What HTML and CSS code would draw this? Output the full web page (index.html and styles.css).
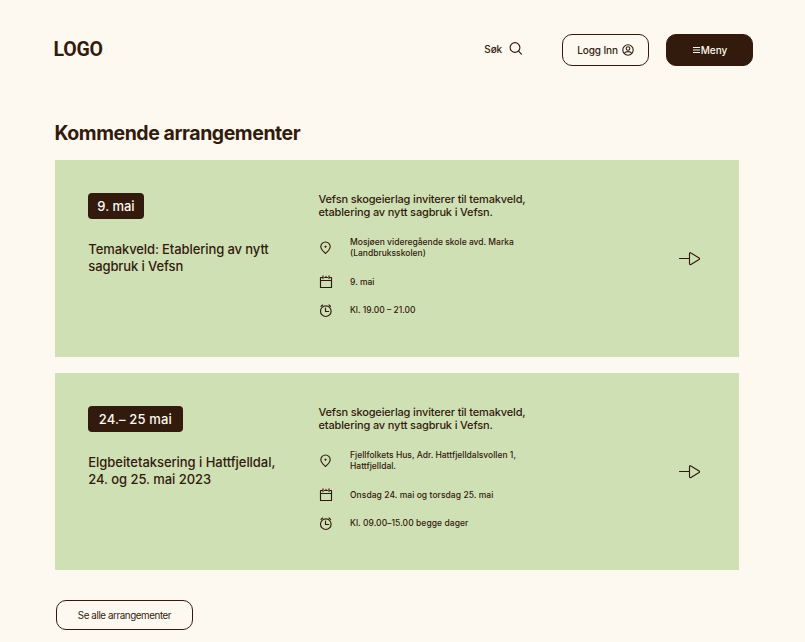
FILE: index.html
```
<!DOCTYPE html>
<html lang="no">
<head>
<meta charset="utf-8">
<title>Kommende arrangementer</title>
<link rel="stylesheet" href="styles.css">
</head>
<body>
<svg class="sprite" aria-hidden="true">
  <symbol id="pin" viewBox="0 0 14 14"><path d="M6.500 12.500C4.700 10.700 1.800 8.400 1.800 5.700A4.700 4.700 0 0 1 11.200 5.700C11.200 8.400 8.300 10.700 6.500 12.500Z"/><path d="M6.500 5v1.200M5.900 5.600h1.200"/></symbol>
  <symbol id="calendar" viewBox="0 0 14 14"><path d="M3 2.500H1.500v10h11v-10H11M5.500 2.500h3M1.500 5.500h11M4 .9v2.700M10 .9v2.700M7 1.400v1.100"/></symbol>
  <symbol id="clock" viewBox="0 0 14 14"><circle cx="6.800" cy="7.200" r="5.300"/><path d="M6.500 4v3.500h3.200M2 2.400 3.600 1M11.600 2.400 10 1"/></symbol>
  <symbol id="arrow" viewBox="0 0 22 14"><path d="M.5 6.500h10M10.500 1.500v10.300c0 .8.800 1 1.400.600l8.200-5c.6-.4.600-1 0-1.400l-8.200-5.100c-.6-.4-1.400-.2-1.400.6Z"/></symbol>
</svg>
<header class="header">
  <div class="logo">LOGO</div>
  <nav class="nav">
    <a class="search">Søk
      <svg class="search-icon" viewBox="0 0 14 14"><circle cx="6" cy="5.500" r="4.900"/><path d="m9.500 9.100 3 3"/></svg>
    </a>
    <a class="button login">Logg Inn
      <svg class="user-icon" viewBox="0 0 12 12"><circle cx="6" cy="6" r="5.200"/><circle cx="6" cy="4.500" r="1.800"/><path d="M2.300 9.300c1.600-2.300 5.800-2.300 7.400 0"/></svg>
    </a>
    <a class="button menu"><svg class="menu-icon" viewBox="0 0 7 6"><path d="M0 .5h7M0 3h7M0 5.500h7"/></svg>Meny</a>
  </nav>
</header>
<main class="main">
  <h1 class="heading">Kommende arrangementer</h1>
  <article class="card">
    <div class="summary">
      <span class="date">9. mai</span>
      <h2 class="title">Temakveld: Etablering av nytt<br>sagbruk i Vefsn</h2>
    </div>
    <div class="details">
      <p class="intro">Vefsn skogeierlag inviterer til temakveld,<br>etablering av nytt sagbruk i Vefsn.</p>
      <ul class="facts">
        <li class="fact place"><svg class="icon"><use href="#pin"/></svg><span>Mosjøen videregående skole avd. Marka<br>(Landbruksskolen)</span></li>
        <li class="fact"><svg class="icon"><use href="#calendar"/></svg><span>9. mai</span></li>
        <li class="fact"><svg class="icon"><use href="#clock"/></svg><span>Kl. 19.00 – 21.00</span></li>
      </ul>
    </div>
    <svg class="arrow"><use href="#arrow"/></svg>
  </article>
  <article class="card">
    <div class="summary">
      <span class="date date-range">24.– 25 mai</span>
      <h2 class="title title-wide">Elgbeitetaksering i Hattfjelldal,<br>24. og 25. mai 2023</h2>
    </div>
    <div class="details">
      <p class="intro">Vefsn skogeierlag inviterer til temakveld,<br>etablering av nytt sagbruk i Vefsn.</p>
      <ul class="facts">
        <li class="fact place"><svg class="icon"><use href="#pin"/></svg><span>Fjellfolkets Hus, Adr. Hattfjelldalsvollen 1,<br>Hattfjelldal.</span></li>
        <li class="fact"><svg class="icon"><use href="#calendar"/></svg><span class="spaced">Onsdag 24. mai og torsdag 25. mai</span></li>
        <li class="fact"><svg class="icon"><use href="#clock"/></svg><span class="spaced">Kl. 09.00–15.00 begge dager</span></li>
      </ul>
    </div>
    <svg class="arrow"><use href="#arrow"/></svg>
  </article>
  <a class="button all">Se alle arrangementer</a>
</main>
</body>
</html>
```
FILE: styles.css
```
* { box-sizing: border-box; }
html { overflow: hidden; }
body {
  margin: 0;
  background: #fef9f0;
  color: #321b0d;
  font-family: Inter, "Liberation Sans", sans-serif;
  font-weight: 500;
}
h1, h2, p, ul { margin: 0; padding: 0; }
svg { fill: none; stroke: currentColor; stroke-width: 1.15; stroke-linecap: round; stroke-linejoin: round; flex: none; }
.sprite { display: none; }
.header {
  display: flex;
  justify-content: space-between;
  align-items: center;
  height: 100px;
  padding: 0 52px 0 53px;
}
.logo { font: 700 19.500px/20px Roboto, sans-serif; letter-spacing: -.2px; padding-left: .5px; }
.nav { display: flex; align-items: center; font-size: 10px; }
.search { display: flex; align-items: center; gap: 7px; margin-right: 39px; letter-spacing: -.15px; padding-bottom: 3px; }
.search-icon { width: 14px; height: 14px; }
.button { display: flex; align-items: center; justify-content: center; border: 1px solid #321b0d; border-radius: 10px; }
.login { width: 87px; height: 32px; gap: 4px; margin-right: 17px; letter-spacing: -.1px; }
.user-icon { width: 12px; height: 12px; stroke-width: 1.100; }
.menu { width: 87px; height: 32px; gap: 1px; padding-left: 1px; background: #321b0d; color: #fff8ef; }
.menu-icon { width: 7px; height: 6px; stroke-width: 1; stroke-linecap: butt; }
.main { padding: 20px 66px 0 55px; }
.heading { font-size: 19.5px; line-height: 26px; font-weight: 700; letter-spacing: -.45px; margin: 0 0 14px -.5px; }
.card {
  display: grid;
  grid-template-columns: 230.500px 1fr 22px;
  height: 197px;
  margin-bottom: 16px;
  padding: 33px 38px 0 33px;
  background: #d0e0b5;
}
.date {
  display: inline-block;
  padding: 0 9.300px;
  border-radius: 4px;
  background: #321b0d;
  color: #fff8ef;
  font-size: 13px;
  line-height: 26px;
}
.date-range { padding: 0 10.800px; letter-spacing: .15px; }
.title { margin-top: 22px; padding-left: .3px; font-size: 13px; line-height: 17px; font-weight: 500; letter-spacing: -.1px; white-space: nowrap; }
.title-wide { letter-spacing: -.05px; }
.intro { font-size: 11px; line-height: 13.400px; letter-spacing: -.15px; white-space: nowrap; }
.facts { list-style: none; margin-top: 15.200px; font-size: 8.500px; line-height: 10.700px; }
.fact { display: flex; align-items: center; gap: 17.500px; height: 28.500px; }
.place { height: 26px; margin-bottom: 7px; }
.icon { width: 14px; height: 14px; }
.spaced { letter-spacing: .06px; }
.arrow { width: 22px; height: 14px; margin-top: 59px; }
.all { width: 137px; height: 30px; margin: 30px 0 0 1px; font-size: 9.800px; font-weight: 400; letter-spacing: -.42px; }
```
